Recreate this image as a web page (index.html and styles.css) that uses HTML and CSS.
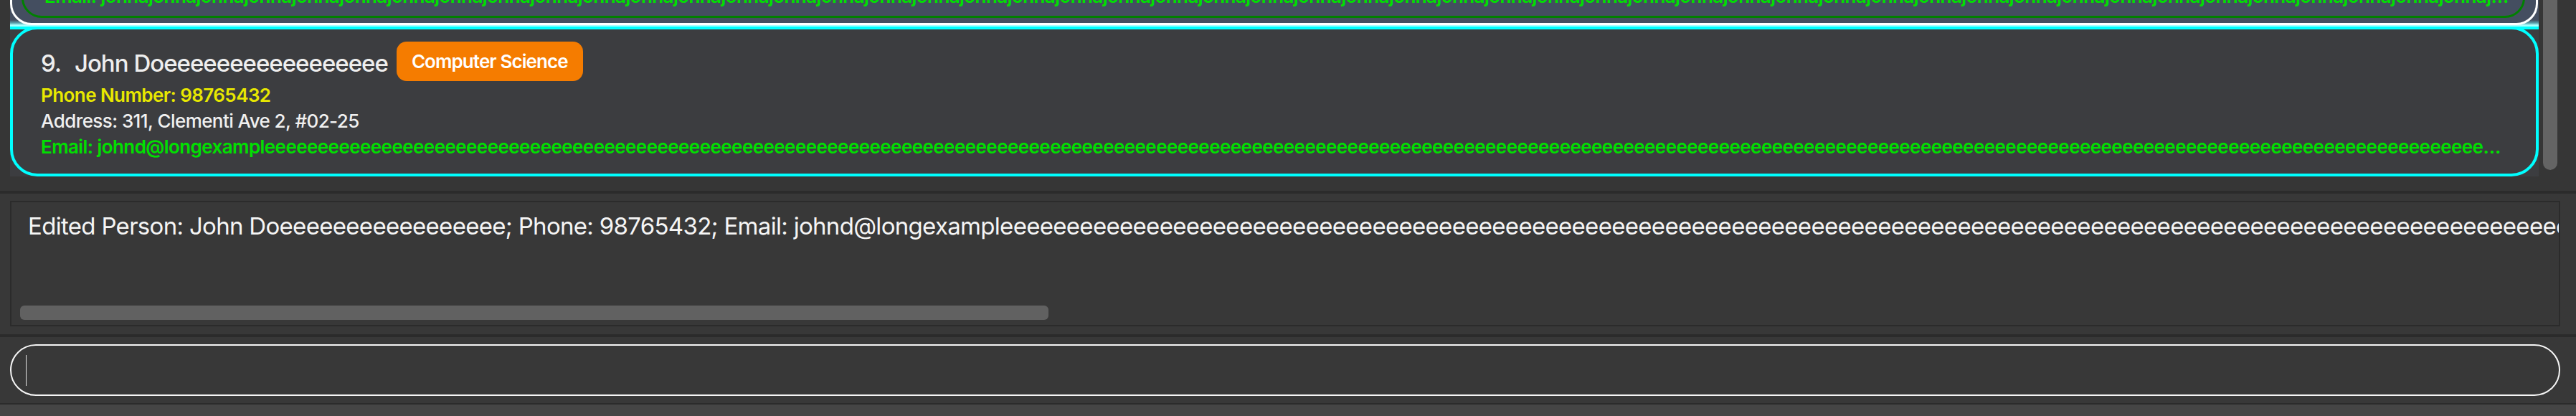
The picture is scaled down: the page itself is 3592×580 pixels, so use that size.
FILE: index.html
```html
<!DOCTYPE html>
<html lang="en">
<head>
<meta charset="utf-8">
<title>Address Book</title>
<link rel="stylesheet" href="styles.css">
</head>
<body>
<div class="app">
  <div class="list-pane">
    <div class="cells">
      <div class="cell-prev">
        <div class="card-prev">
          <div class="card-prev-inner">
            <div class="line email">Email: johnajohnajohnajohnajohnajohnajohnajohnajohnajohnajohnajohnajohnajohnajohnajohnajohnajohnajohnajohnajohnajohnajohnajohnajohnajohnajohnajohnajohnajohnajohnajohnajohnajohnajohnajohnajohnajohnajohnajohnajohnajohnajohnajohnajohnajohnajohnajohnajohnajohnajohnajohnajohnajohnajohnajohnajohnajohnajohnajohnajohnajohnajohnajohnajohnajohna</div>
          </div>
        </div>
      </div>
      <div class="cell-sel">
        <div class="card">
          <div class="name-row">
            <span class="idx">9.</span>
            <span class="name">John Doeeeeeeeeeeeeeeeee</span>
            <span class="tag">Computer Science</span>
          </div>
          <div class="line phone">Phone Number: 98765432</div>
          <div class="line address">Address: 311, Clementi Ave 2, #02-25</div>
          <div class="line email">Email: johnd@longexampleeeeeeeeeeeeeeeeeeeeeeeeeeeeeeeeeeeeeeeeeeeeeeeeeeeeeeeeeeeeeeeeeeeeeeeeeeeeeeeeeeeeeeeeeeeeeeeeeeeeeeeeeeeeeeeeeeeeeeeeeeeeeeeeeeeeeeeeeeeeeeeeeeeeeeeeeeeeeeeeeeeeeeeeeeeeeeeeeeeeeeeeeeeeeeeeeeeeeeeeeeeeeeeeeeeeeeeeeeeeeeeeeeeeeeeeeeeeeeeeeeeeeeeeeeeeeeeeeeeeeeeeeeeeeeeeeeeeeeeeeeeeeeeeeeeeeeeeeeeeeeeeeeeeeeeeeeeeeeeeeeeeeeeeeeeeeeeeeeeeeeeeeeeeeeeeeeeeeeeeeeeeeeeeeeeeeeeeeeeeeeeeeeeeeeeeeeeeeeeeeeeeeeeeeeeeeeeeeeeee.com</div>
        </div>
      </div>
    </div>
    <div class="vscroll"></div>
  </div>
  <div class="divider"></div>
  <div class="result-pane">
    <div class="result-box">
      <div class="result-text">Edited Person: John Doeeeeeeeeeeeeeeeee; Phone: 98765432; Email: johnd@longexampleeeeeeeeeeeeeeeeeeeeeeeeeeeeeeeeeeeeeeeeeeeeeeeeeeeeeeeeeeeeeeeeeeeeeeeeeeeeeeeeeeeeeeeeeeeeeeeeeeeeeeeeeeeeeeeeeeeeeeeeeeeeeeeeeeeeeeeeeeeeeeeeeeeeeeeeeeeeeeeeeeeeeeeeeeeeeeeeeeeeeeeeeeeeeeeeeeeeeeeeeeeeeeeeeeeeeeeeeeeeeeeeeeeeeeeeeeeeeeeeeeeeeeeeeeeeeeeeeeeeeeeeeeeeeeeeeeeeeeeeeeeeeeeeeeeeeeeeeeeeeeeeeeeeeeeeeeeeeeeeeeeeeeeeeeeeeeeeeeeeeeeeeeeeeeeeeeeeeeeeeeeeeeeeeeeeeeeeeeeeeeeeeeeeeeeeeeeeeee.com; Address: 311, Clementi Ave 2, #02-25; Tags: [Computer Science]</div>
      <div class="hscroll"></div>
    </div>
  </div>
  <div class="divider"></div>
  <div class="command-pane">
    <div class="command-box"><span class="caret"></span></div>
  </div>
  <div class="divider thin"></div>
  <div class="status"></div>
</div>
</body>
</html>
```

FILE: styles.css
```css
* { box-sizing: border-box; margin: 0; padding: 0; }
html, body { width: 3592px; height: 580px; overflow: hidden; }
body { background: #383838; font-family: Inter, "Noto Sans", sans-serif; }

.app { display: flex; flex-direction: column; height: 580px; }

.list-pane { height: 266px; flex: none; background: #363636; display: flex; padding-left: 14px; }
.cells { width: 3526px; flex: none; display: flex; flex-direction: column; }
.vscroll { width: 20px; height: 237px; margin-left: 6px; background: #646464; border-radius: 0 0 10px 10px; }

.cell-prev {
  height: 37px; flex: none; overflow: hidden;
  display: flex; flex-direction: column; justify-content: flex-end;
  background: linear-gradient(to bottom, #444e60 0, #444e60 28px, #5a9fab 32px, #aaffff 35px, #aaffff 37px);
}
.card-prev {
  flex: none; height: 120px; margin: 0 1px 2px 0;
  border: 3px solid #ffffff; border-radius: 30px;
  padding: 0 15px 7px 13px;
  display: flex; flex-direction: column; justify-content: flex-end;
  background: #444e60;
}
.card-prev-inner {
  flex: none; height: 100px;
  border: 3px solid #008000; border-radius: 28px;
  padding: 0 17px 9px 29px;
  display: flex; flex-direction: column; justify-content: flex-end;
}

.line {
  font-size: 26px; line-height: 36px; letter-spacing: -0.022em;
  white-space: nowrap; overflow: hidden; text-overflow: ellipsis; font-weight: 600;
}
.email { color: #00e000; }
.phone { color: #e8e800; margin-top: 2px; }
.address { color: #f0f0f0; font-weight: 500; }

.cell-sel { height: 209px; flex: none; background: #3c3d40; border-top: 4px solid #00ffff; }
.card {
  height: 209px; margin-top: -4px;
  border: 4px solid #00ffff; border-radius: 38px;
  padding: 17px 34px 0 39px;
  background: #3c3d40;
}
.name-row { display: flex; align-items: center; height: 55px; }
.idx, .name {
  font-size: 33px; font-weight: 500; color: #eeeeee; letter-spacing: -0.03em;
  padding-top: 5px; white-space: nowrap;
}
.idx { margin-right: 19px; }
.tag {
  margin-left: 12px; height: 55px; padding: 0 21px;
  display: flex; align-items: center;
  background: #f57c00; border-radius: 14px;
  color: #ffffff; font-size: 26px; font-weight: 600; letter-spacing: -0.035em; white-space: nowrap;
}

.divider { height: 4px; flex: none; background: #2b2b2b; }
.divider.thin { height: 2px; }

.result-pane { height: 196px; flex: none; padding: 10px 22px 11px 14px; }
.result-box {
  height: 175px; border: 2px solid #2b2b2b;
  display: flex; flex-direction: column;
  padding: 13px 0 7px 0; overflow: hidden;
}
.result-text {
  font-size: 33px; color: #f5f5f5; white-space: nowrap; letter-spacing: -0.021em;
  padding-left: 23px; overflow: hidden; font-weight: 400;
}
.hscroll { margin-top: auto; margin-left: 12px; width: 1434px; height: 20px; background: #616161; border-radius: 6px; flex: none; }

.command-pane { height: 92px; flex: none; padding: 10px 22px 10px 14px; }
.command-box {
  height: 72px; border: 2px solid #f5f5f5; border-radius: 36px;
  display: flex; align-items: center; padding-left: 20px;
}
.caret { width: 1px; height: 43px; background: #e6e6e6; }

.status { flex: 1; background: #454545; }
```
